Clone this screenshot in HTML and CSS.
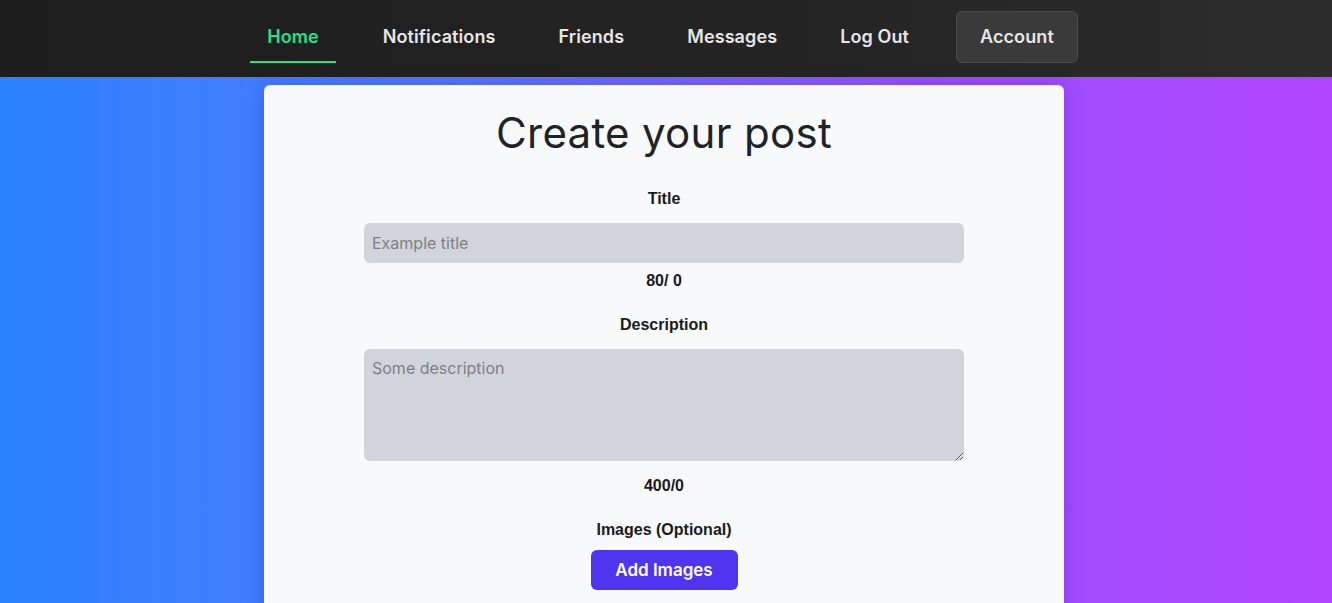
FILE: index.html
```html
<!DOCTYPE html>
<html lang="en">
<head>
<meta charset="utf-8">
<title>Create your post</title>
<link rel="stylesheet" href="styles.css">
</head>
<body>
<nav class="navbar">
  <ul class="nav-list">
    <li><a class="nav-link active" href="#">Home</a></li>
    <li><a class="nav-link" href="#">Notifications</a></li>
    <li><a class="nav-link" href="#">Friends</a></li>
    <li><a class="nav-link" href="#">Messages</a></li>
    <li><a class="nav-link" href="#">Log Out</a></li>
    <li><a class="nav-link account" href="#">Account</a></li>
  </ul>
</nav>
<main class="page">
  <form class="card">
    <h1 class="card-title">Create your post</h1>
    <label class="field-label" for="title">Title</label>
    <input class="field-input" id="title" type="text" placeholder="Example title">
    <div class="counter">80/ 0</div>
    <label class="field-label" for="desc">Description</label>
    <textarea class="field-input field-area" id="desc" placeholder="Some description"></textarea>
    <div class="counter">400/0</div>
    <div class="field-label">Images (Optional)</div>
    <button class="add-btn" type="button">Add Images</button>
  </form>
</main>
</body>
</html>
```
FILE: styles.css
```css
* { box-sizing: border-box; }
html, body { height: 100%; }
body {
  margin: 0;
  font-family: "Inter", "Liberation Sans", sans-serif;
  background: linear-gradient(90deg, #2a82ff 0%, #5577ff 35%, #9b50ff 70%, #b044ff 100%);
  overflow: hidden;
}
.navbar {
  height: 77px;
  background: linear-gradient(90deg, #1d1d1d 0%, #242424 60%, #2c2c2c 100%);
  display: flex;
  justify-content: center;
  align-items: flex-start;
  padding: 11px 4px 0 0;
}
.nav-list {
  list-style: none;
  margin: 0;
  padding: 0;
  display: flex;
  align-items: flex-start;
  gap: 31px;
}
.nav-link {
  display: block;
  padding: 0 16px;
  height: 52px;
  line-height: 51px;
  color: #e6e6e6;
  text-decoration: none;
  font-size: 18px;
  font-weight: 600;
  letter-spacing: 0.1px;
  border-bottom: 2px solid transparent;
}
.nav-link.active {
  color: #1fe38b;
  border-bottom-color: #1fe38b;
  padding: 0 17px;
}
.nav-link.account {
  line-height: 50px;
  padding: 0 23px;
  background: #3a3a3a;
  border: 1px solid #4b4b4b;
  border-radius: 6px;
}
.page {
  display: flex;
  justify-content: center;
  padding: 8px 4px 0 0;
}
.card {
  width: 800px;
  height: 560px;
  background: #f8f9fb;
  border-radius: 6px;
  box-shadow: 0 0 18px rgba(40, 20, 120, 0.25);
  display: flex;
  flex-direction: column;
  align-items: center;
  padding-top: 20px;
}
.card-title {
  margin: 0 0 29px;
  font-size: 42px;
  font-weight: 400;
  color: #1f2226;
  line-height: 56px;
  letter-spacing: 0.3px;
}
.field-label {
  font-family: "Liberation Sans", Arial, sans-serif;
  font-weight: 700;
  font-size: 16px;
  color: #1a1a1a;
  line-height: 18px;
  margin-bottom: 15px;
}
.field-input {
  width: 600px;
  height: 40px;
  border: none;
  border-radius: 6px;
  background: #d1d5db;
  padding: 0 8px;
  font-family: "Inter", "Liberation Sans", sans-serif;
  font-size: 16px;
  color: #333;
  outline: none;
}
.field-input::placeholder { color: #7d8086; }
.field-area {
  height: 112px;
  padding: 9px 8px;
  margin-bottom: 7px;
  resize: vertical;
}
.counter {
  font-family: "Liberation Sans", Arial, sans-serif;
  font-weight: 700;
  font-size: 16px;
  color: #1a1a1a;
  line-height: 18px;
  margin: 9px 0 26px;
}
.add-btn {
  margin-top: -4px;
  width: 147px;
  height: 40px;
  border: none;
  border-radius: 6px;
  background: #4f35f0;
  color: #fff;
  font-family: "Inter", "Liberation Sans", sans-serif;
  font-size: 17px;
  font-weight: 600;
}
```
